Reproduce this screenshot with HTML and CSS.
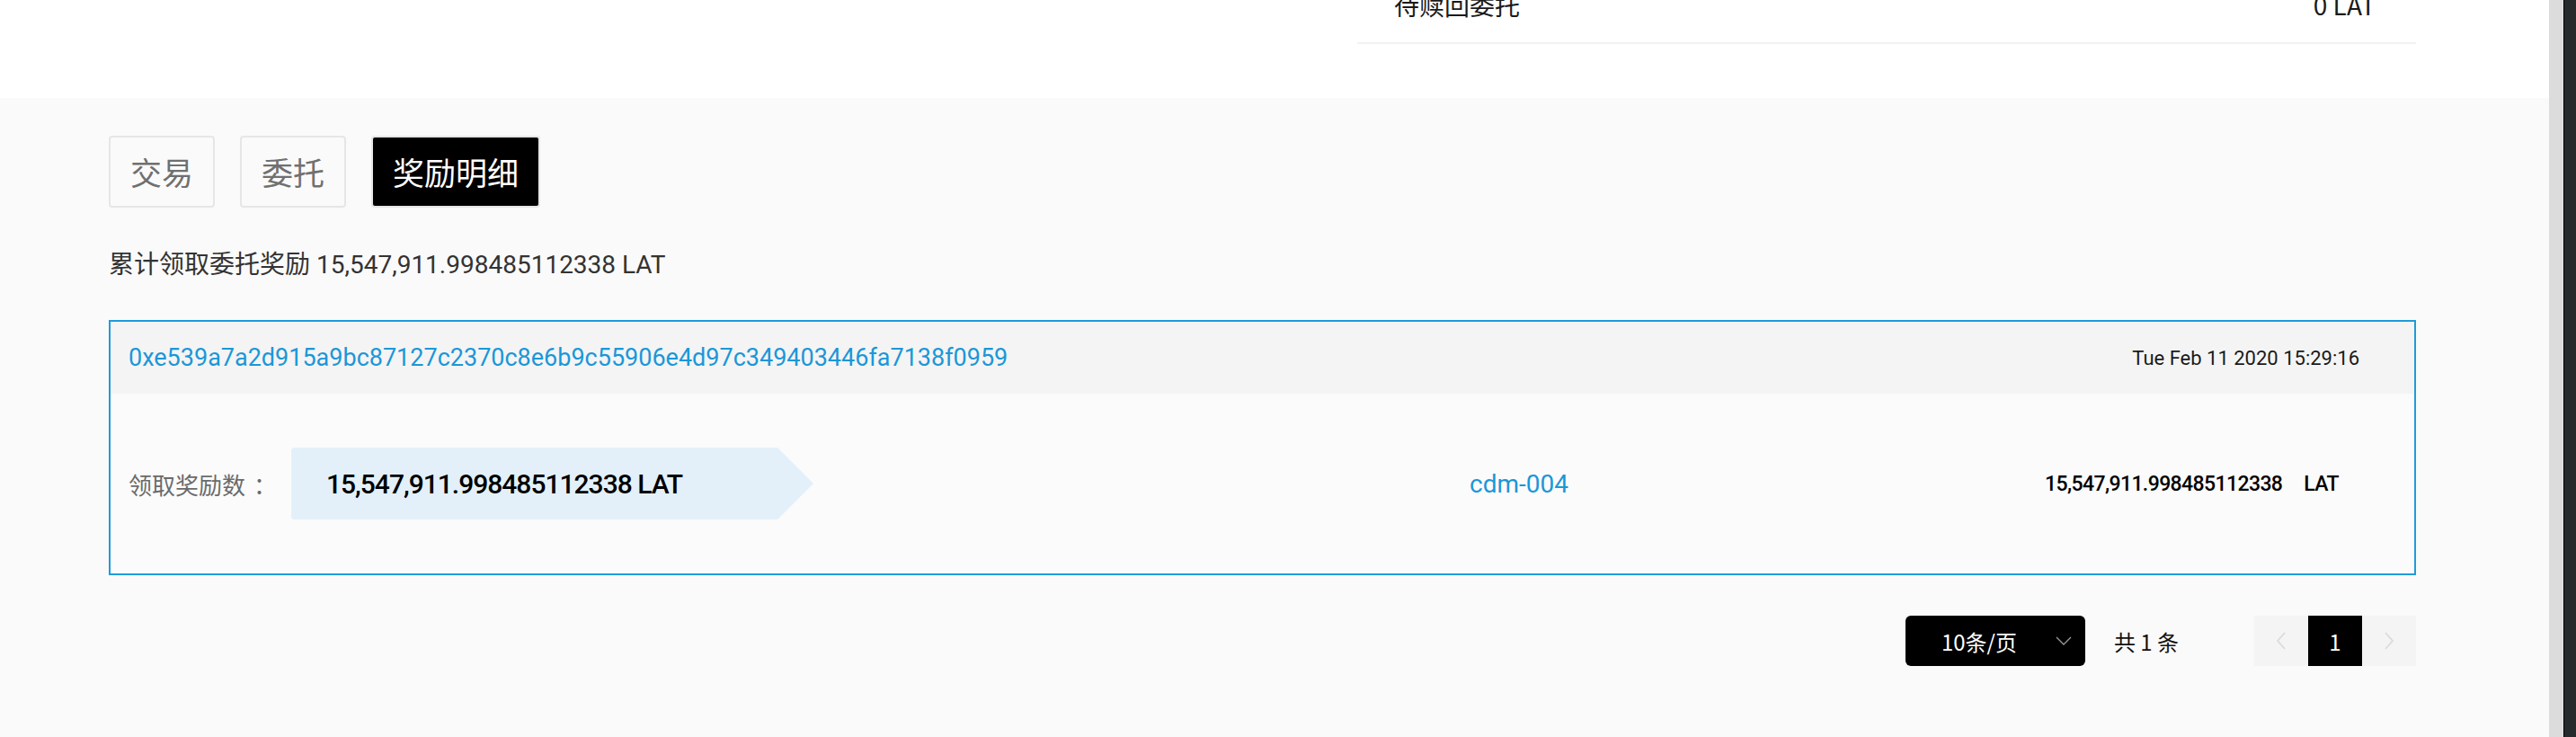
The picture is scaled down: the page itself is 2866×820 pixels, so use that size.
FILE: index.html
```html
<!DOCTYPE html>
<html lang="zh-CN">
<head>
<meta charset="utf-8">
<title>奖励明细</title>
<link rel="stylesheet" href="styles.css">
</head>
<body>
<div class="window">
  <main class="page">
    <section class="top">
      <div class="top-inner">
        <div class="top-left"></div>
        <div class="top-right">
          <div class="kv-row">
            <span class="kv-label">待赎回委托</span>
            <span class="kv-value">0 LAT</span>
          </div>
        </div>
      </div>
    </section>

    <section class="content">
      <div class="tabs">
        <button class="tab">交易</button>
        <button class="tab">委托</button>
        <button class="tab active">奖励明细</button>
      </div>

      <p class="summary">累计领取委托奖励 15,547,911.998485112338 LAT</p>

      <div class="card">
        <div class="card-head">
          <a class="hash">0xe539a7a2d915a9bc87127c2370c8e6b9c55906e4d97c349403446fa7138f0959</a>
          <span class="date">Tue Feb 11 2020 15:29:16</span>
        </div>
        <div class="card-body">
          <div class="reward">
            <span class="reward-label">领取奖励数<span class="colon">：</span></span>
            <span class="reward-amount">15,547,911.998485112338 LAT</span>
          </div>
          <a class="node">cdm-004</a>
          <div class="row-amount"><span class="num">15,547,911.998485112338</span><span class="unit">LAT</span></div>
        </div>
      </div>

      <div class="pager">
        <div class="size-select">
          <span class="size-text">10条/页</span>
          <svg class="size-caret" width="18" height="10" viewBox="0 0 18 10"><path d="M1 1 L9 9 L17 1" fill="none" stroke="#9a9a9a" stroke-width="1.3"/></svg>
        </div>
        <span class="total">共 1 条</span>
        <div class="pages">
          <span class="page-btn nav">
            <svg width="12" height="20" viewBox="0 0 12 20"><path d="M10 1 L2 10 L10 19" fill="none" stroke="#d9d9d9" stroke-width="1.6"/></svg>
          </span>
          <span class="page-btn current">1</span>
          <span class="page-btn nav">
            <svg width="12" height="20" viewBox="0 0 12 20"><path d="M2 1 L10 10 L2 19" fill="none" stroke="#d9d9d9" stroke-width="1.6"/></svg>
          </span>
        </div>
      </div>
    </section>
  </main>
  <div class="scrollbar">
    <div class="scroll-track"></div>
    <div class="scroll-edge"></div>
  </div>
</div>
</body>
</html>
```

FILE: styles.css
```css
html, body {
  margin: 0;
  padding: 0;
  height: 100%;
}

body {
  font-family: Roboto, "Noto Sans CJK SC", sans-serif;
  color: #222;
  background: #fafafa;
  overflow: hidden;
}

.window {
  display: flex;
  height: 820px;
}

.page {
  flex: 1;
  display: flex;
  flex-direction: column;
  background: #fafafa;
  overflow: hidden;
}

/* ---------- top (white) section ---------- */
.top {
  background: #fff;
  height: 109px;
  flex: none;
  overflow: hidden;
  padding: 0 148px 0 121px;
}

.top-inner {
  display: grid;
  grid-template-columns: 1389px 1fr;
}

.kv-row {
  display: flex;
  justify-content: space-between;
  align-items: center;
  height: 84px;
  margin-top: -37px;
  padding: 0 45px 0 41px;
  border-bottom: 2px solid #f2f2f2;
  font-family: "Noto Sans CJK SC", sans-serif;
  font-size: 28px;
  color: #1a1a1a;
}

/* ---------- content ---------- */
.content {
  padding: 42px 148px 0 121px;
}

.tabs {
  display: flex;
  gap: 28px;
}

.tab {
  box-sizing: border-box;
  height: 80px;
  padding: 0 22px;
  border: 2px solid #e6e6e6;
  border-radius: 4px;
  background: #fafafa;
  color: #707070;
  font-family: "Noto Sans CJK SC", sans-serif;
  font-size: 35px;
  line-height: 74px;
}

.tab.active {
  background: #000;
  color: #fff;
  box-shadow: inset 0 0 0 1px #000;
}

.summary {
  margin: 44px 0 0;
  font-size: 28px;
  line-height: 40px;
  color: #333;
}

/* ---------- card ---------- */
.card {
  margin-top: 41px;
  border: 2px solid #1f9bdb;
  background: #fbfbfb;
}

.card-head {
  height: 80px;
  display: flex;
  align-items: center;
  justify-content: space-between;
  padding: 0 61px 0 20px;
  background: #f4f4f4;
}

.hash {
  color: #1b97d8;
  font-size: 27px;
}

.date {
  font-size: 22px;
  color: #1a1a1a;
}

.card-body {
  height: 200px;
  display: grid;
  grid-template-columns: 1492px 640px 1fr;
  align-items: center;
  padding-left: 20px;
}

.reward {
  display: flex;
  align-items: center;
}

.reward-label {
  width: 156px;
  margin-right: 25px;
  font-family: "Noto Sans CJK SC", sans-serif;
  font-size: 26px;
  color: #6b6b6b;
  white-space: nowrap;
}

.colon {
  margin-left: 9px;
}

.reward-amount {
  box-sizing: border-box;
  width: 581px;
  height: 80px;
  padding-left: 39px;
  display: flex;
  align-items: center;
  background: #e3f0f9;
  border-radius: 4px 0 0 4px;
  clip-path: polygon(0 0, calc(100% - 40px) 0, 100% 50%, calc(100% - 40px) 100%, 0 100%);
  font-size: 30px;
  font-weight: 500;
  letter-spacing: -1px;
  color: #000;
}

.node {
  color: #1b97d8;
  font-size: 28px;
}

.row-amount {
  display: flex;
  gap: 24px;
  font-size: 23px;
  font-weight: 500;
  letter-spacing: -0.6px;
  color: #000;
}

/* ---------- pagination ---------- */
.pager {
  margin-top: 45px;
  display: flex;
  justify-content: flex-end;
  align-items: center;
  font-family: "Noto Sans CJK SC", sans-serif;
}

.size-select {
  box-sizing: border-box;
  width: 200px;
  height: 56px;
  padding: 0 15px 0 40px;
  display: flex;
  align-items: center;
  justify-content: space-between;
  background: #000;
  border-radius: 6px;
  color: #fff;
  font-size: 24px;
}

.total {
  margin-left: 32px;
  font-size: 24px;
  color: #111;
}

.pages {
  display: flex;
  margin-left: 84px;
}

.page-btn {
  width: 60px;
  height: 56px;
  display: flex;
  align-items: center;
  justify-content: center;
  font-size: 24px;
}

.page-btn.nav {
  background: #f4f4f4;
}

.page-btn.current {
  background: #000;
  color: #fff;
}

/* ---------- fake window scrollbar ---------- */
.scrollbar {
  flex: none;
  display: flex;
  width: 30px;
}

.scroll-track {
  width: 16px;
  background: #dcdcdc;
}

.scroll-edge {
  flex: 1;
  background: #262a2d;
  border-left: 1px solid #000;
}
```
